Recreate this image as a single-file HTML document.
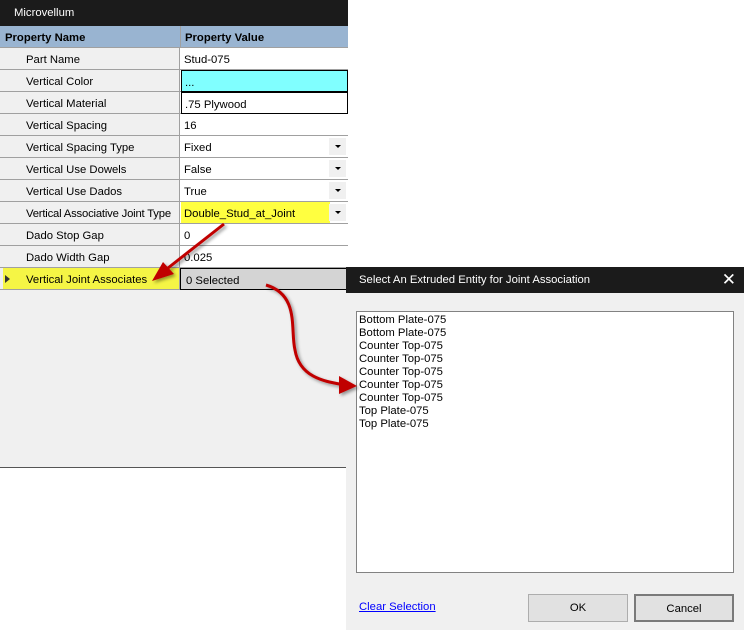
<!DOCTYPE html>
<html><head><meta charset="utf-8"><style>
*{margin:0;padding:0;box-sizing:border-box}
body{width:744px;height:630px;background:#fff;position:relative;overflow:hidden;font-family:"Liberation Sans",Arial,sans-serif;font-size:11.3px;color:#000;white-space:nowrap}
.abs{position:absolute}
#left{left:0;top:0;width:348px;height:468px;background:#f0f0f0;border-bottom:1px solid #555}
#title{left:0;top:0;width:348px;height:26px;background:#1b1b1b;color:#fff;padding:7px 0 0 14px}
.row{position:absolute;left:0;width:348px;height:22px;border-bottom:1px solid #a0a0a0;background:#fff}
.row .n{position:absolute;left:0;top:0;width:180px;height:21px;background:#f0f0f0;border-right:1px solid #a0a0a0;padding:6px 0 0 26px}
.row .v{position:absolute;left:181px;top:0;width:167px;height:21px;padding:6px 0 0 3px}
.dd{position:absolute;right:2px;top:2px;width:17px;height:17px;background:#f0f0f0}
.dd:after{content:"";position:absolute;left:6px;top:7px;border-left:3px solid transparent;border-right:3px solid transparent;border-top:3px solid #000}
#hdr{left:0;top:26px;width:348px;height:22px;background:#99b4d1;font-weight:bold;border-bottom:1px solid #a0a0a0}
#dlg{left:346px;top:267px;width:398px;height:363px;background:#f0f0f0}
#dt{left:0;top:0;width:398px;height:26px;background:#1b1b1b;color:#fff;padding:7px 0 0 13px}
#list{left:10px;top:44px;width:378px;height:262px;background:#fff;border:1px solid #828282;padding:2px 0 0 2px;line-height:13px}
.btn{position:absolute;top:327px;width:100px;height:28px;border:1px solid #adadad;background:#e1e1e1;text-align:center;padding-top:7px}
</style></head><body>
<div id="left" class="abs">
<div id="title" class="abs">Microvellum</div>
<div id="hdr" class="abs"><div class="abs" style="left:5px;top:6px">Property Name</div><div class="abs" style="left:180px;top:0;width:1px;height:22px;background:#a0a0a0"></div><div class="abs" style="left:185px;top:6px">Property Value</div></div>
<div class="row" style="top:48px"><div class="n">Part Name</div><div class="v">Stud-075</div></div>
<div class="row" style="top:70px"><div class="n">Vertical Color</div><div class="v" style="background:#80ffff;border:1px solid #000;top:0;height:22px">...</div></div>
<div class="row" style="top:92px"><div class="n">Vertical Material</div><div class="v" style="border:1px solid #000;height:22px">.75 Plywood</div></div>
<div class="row" style="top:114px"><div class="n">Vertical Spacing</div><div class="v">16</div></div>
<div class="row" style="top:136px"><div class="n">Vertical Spacing Type</div><div class="v">Fixed</div><div class="dd"></div></div>
<div class="row" style="top:158px"><div class="n">Vertical Use Dowels</div><div class="v">False</div><div class="dd"></div></div>
<div class="row" style="top:180px"><div class="n">Vertical Use Dados</div><div class="v">True</div><div class="dd"></div></div>
<div class="row" style="top:202px"><div class="n" style="letter-spacing:-0.2px">Vertical Associative Joint Type</div><div class="v" style="background:#ffff40;width:149px">Double_Stud_at_Joint</div><div class="dd"></div></div>
<div class="row" style="top:224px"><div class="n">Dado Stop Gap</div><div class="v">0</div></div>
<div class="row" style="top:246px"><div class="n">Dado Width Gap</div><div class="v">0.025</div></div>
<div class="row" style="top:268px;background:#f0f0f0"><div class="n" style="background:#f5f545;left:3px;width:177px;padding-left:23px">Vertical Joint Associates</div><div class="abs" style="left:5px;top:7px;border-top:4px solid transparent;border-bottom:4px solid transparent;border-left:5px solid #333"></div><div class="v" style="background:#d4d4d4;border:1px solid #000;left:180px;height:22px;padding-left:5px">0 Selected</div></div>
</div>
<div id="dlg" class="abs">
<div id="dt" class="abs">Select An Extruded Entity for Joint Association</div>
<div class="abs" style="right:8px;top:3px;color:#fff;font-size:17px">✕</div>
<div id="list" class="abs">Bottom Plate-075<br>Bottom Plate-075<br>Counter Top-075<br>Counter Top-075<br>Counter Top-075<br>Counter Top-075<br>Counter Top-075<br>Top Plate-075<br>Top Plate-075</div>
<div class="abs" style="left:13px;top:334px;color:#0000ff;text-decoration:underline">Clear Selection</div>
<div class="btn" style="left:182px">OK</div>
<div class="btn" style="left:288px;border:2px solid #7a7a7a">Cancel</div>
</div>
<svg class="abs" style="left:0;top:0" width="744" height="630">
<defs><filter id="s"><feDropShadow dx="2" dy="2" stdDeviation="1.5" flood-color="#000" flood-opacity=".4"/></filter></defs>
<g filter="url(#s)" fill="#c00000" stroke="#c00000">
<path d="M224 224 L168 268" stroke-width="3" fill="none"/>
<path d="M152 281 L163 262 L174 274 Z" stroke="none"/>
<path d="M266 285 C300 295 290 330 295 350 C300 380 330 382 345 385" stroke-width="3" fill="none"/>
<path d="M357 386 L339 376 L339 394 Z" stroke="none"/>
</g>
</svg>
</body></html>
